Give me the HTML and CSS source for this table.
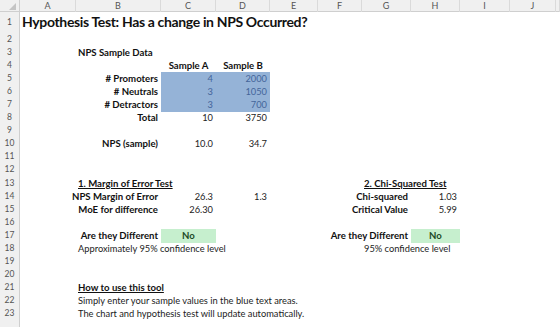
FILE: index.html
```html
<!DOCTYPE html>
<html>
<head>
<meta charset="utf-8">
<link rel="stylesheet" href="styles.css">
</head>
<body>
<div class="sheet">
  <div class="row hdr">
    <div class="corner"><span class="tri"></span></div>
    <div class="ch">A</div><div class="ch">B</div><div class="ch">C</div><div class="ch">D</div><div class="ch">E</div>
    <div class="ch">F</div><div class="ch">G</div><div class="ch">H</div><div class="ch">I</div><div class="ch">J</div><div class="ch"></div>
  </div>
  <div class="row r1"><div class="rn">1</div><div class="cell cA title">Hypothesis Test: Has a change in NPS Occurred?</div></div>
  <div class="row"><div class="rn">2</div></div>
  <div class="row"><div class="rn">3</div><div class="cell cB b">NPS Sample Data</div></div>
  <div class="row"><div class="rn">4</div><div class="cell cC b c">Sample A</div><div class="cell cD b c">Sample B</div></div>
  <div class="row"><div class="rn">5</div><div class="cell cB b r"># Promoters</div><div class="cell cC blue r">4</div><div class="cell cD blue r">2000</div></div>
  <div class="row"><div class="rn">6</div><div class="cell cB b r"># Neutrals</div><div class="cell cC blue r">3</div><div class="cell cD blue r">1050</div></div>
  <div class="row"><div class="rn">7</div><div class="cell cB b r"># Detractors</div><div class="cell cC blue r">3</div><div class="cell cD blue r">700</div></div>
  <div class="row"><div class="rn">8</div><div class="cell cB b r">Total</div><div class="cell cC r">10</div><div class="cell cD r">3750</div></div>
  <div class="row"><div class="rn">9</div></div>
  <div class="row"><div class="rn">10</div><div class="cell cB b r">NPS (sample)</div><div class="cell cC r">10.0</div><div class="cell cD r">34.7</div></div>
  <div class="row"><div class="rn">11</div></div>
  <div class="row"><div class="rn">12</div></div>
  <div class="row"><div class="rn">13</div><div class="cell cB b u">1. Margin of Error Test</div><div class="cell cG b u">2. Chi-Squared Test</div></div>
  <div class="row"><div class="rn">14</div><div class="cell cB b r">NPS Margin of Error</div><div class="cell cC r">26.3</div><div class="cell cD r">1.3</div><div class="cell cG b r">Chi-squared</div><div class="cell cH r">1.03</div></div>
  <div class="row"><div class="rn">15</div><div class="cell cB b r">MoE for difference</div><div class="cell cC r">26.30</div><div class="cell cG b r">Critical Value</div><div class="cell cH r">5.99</div></div>
  <div class="row"><div class="rn">16</div></div>
  <div class="row"><div class="rn">17</div><div class="cell cB b r">Are they Different</div><div class="cell cC green b c">No</div><div class="cell cG b r">Are they Different</div><div class="cell cH green b c">No</div></div>
  <div class="row"><div class="rn">18</div><div class="cell cB">Approximately 95% confidence level</div><div class="cell cG">95% confidence level</div></div>
  <div class="row"><div class="rn">19</div></div>
  <div class="row"><div class="rn">20</div></div>
  <div class="row"><div class="rn">21</div><div class="cell cB b u">How to use this tool</div></div>
  <div class="row"><div class="rn">22</div><div class="cell cB">Simply enter your sample values in the blue text areas.</div></div>
  <div class="row"><div class="rn">23</div><div class="cell cB">The chart and hypothesis test will update automatically.</div></div>
  <div class="row"><div class="rn"></div></div>
</div>
</body>
</html>
```
FILE: styles.css
```css
* { box-sizing: border-box; }
html, body { margin: 0; padding: 0; background: #fff; }
body {
  font-family: Lato, "Open Sans", sans-serif;
  font-size: 9.3px;
  color: #1c1c1c;
  overflow: hidden;
  width: 560px;
  height: 327px;
}
.sheet { width: 560px; }
.row {
  display: grid;
  grid-template-columns: 20px 56px 85px 55px 54px 48px 44px 49px 49px 50px 46px 1fr;
  height: 13.1px;
  line-height: 13.1px;
}
.hdr {
  height: 12px;
  line-height: 12px;
  background: #f0f0f0;
  border-bottom: 1px solid #cfcfcf;
}
.r1 { height: 20.5px; line-height: 20.5px; }
.corner { position: relative; border-right: 1px solid #cfcfcf; }
.tri {
  position: absolute; right: 3px; bottom: 2px;
  width: 0; height: 0;
  border-left: 7px solid transparent;
  border-bottom: 7px solid #c4c4c4;
}
.ch {
  text-align: center;
  font-size: 9px;
  color: #555;
  border-right: 1px solid #dadada;
}
.rn {
  grid-column: 1;
  background: #f0f0f0;
  border-right: 1px solid #cfcfcf;
  border-bottom: 1px solid #e0e0e0;
  color: #555;
  font-size: 8.5px;
  text-align: center;
}
.cell {
  white-space: nowrap;
  padding: 0 2px;
  display: flex;
  min-width: 0;
}
.cA { grid-column: 2; }
.cB { grid-column: 3; }
.cC { grid-column: 4; }
.cD { grid-column: 5; }
.cG { grid-column: 8; }
.cH { grid-column: 9; }
.b { font-weight: bold; color: #111; font-size: 9.6px; }
.u { text-decoration: underline; }
.r { justify-content: flex-end; padding-right: 3px; }
.c { justify-content: center; }
.title {
  font-size: 14px;
  letter-spacing: -0.35px;
  font-weight: bold;
  color: #111;
  padding-left: 2px;
}
.blue { background: #95b3d7; color: #44659a; }
.green { background: #c6efce; color: #1d4a26; }
```
